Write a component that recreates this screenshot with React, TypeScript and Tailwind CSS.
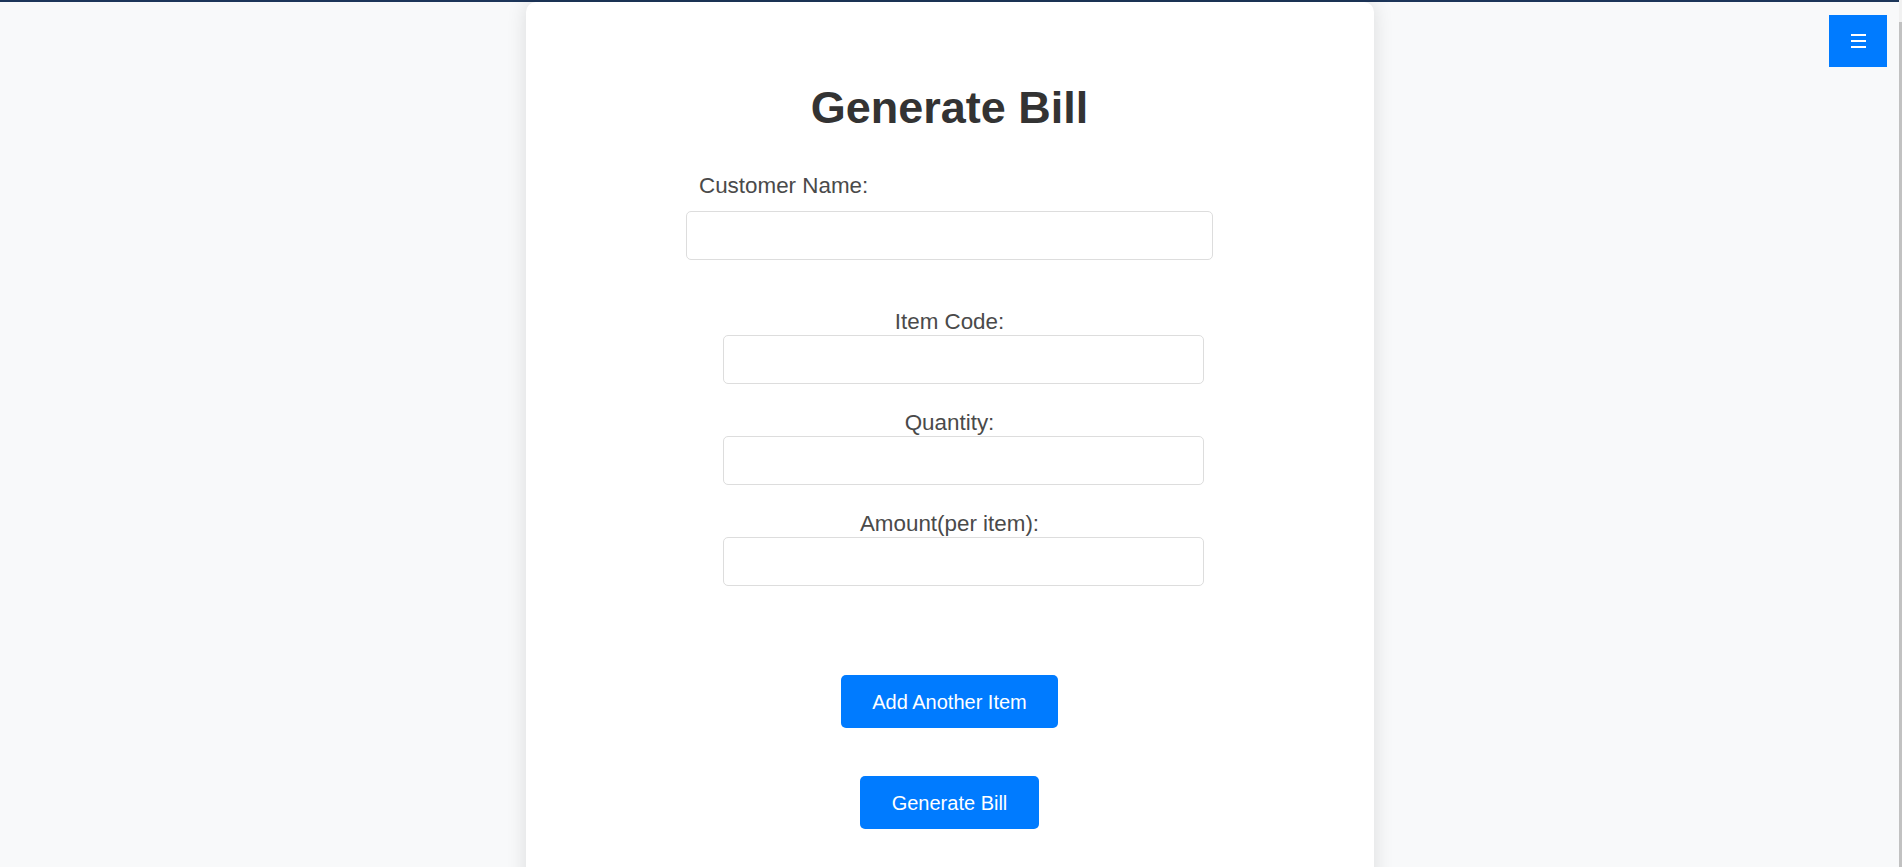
import React from "react";

export default function App() {
  return (
    <div
      className="flex h-screen w-full overflow-hidden bg-[#f8f9fa]"
      style={{ fontFamily: '"Liberation Sans", Arial, sans-serif' }}
    >
      <div className="flex min-h-0 min-w-0 flex-1 flex-col">
        <div className="h-[2px] w-full shrink-0 bg-[#1c3559]" />
        <div className="relative min-h-0 flex-1">
          <div className="mx-auto w-[848px] rounded-t-[10px] bg-white pb-[60px] pt-[80px] shadow-[0_0_20px_rgba(0,0,0,0.12)]">
            <h1 className="text-center text-[45px] font-bold leading-[51px] text-[#333]">
              Generate Bill
            </h1>

            <div className="mx-auto mt-[40px] w-[527px]">
              <label className="block pl-[13px] text-[22.4px] leading-[25px] text-[#4a4a4a]">
                Customer Name:
              </label>
              <input
                type="text"
                className="mt-[13px] block h-[49px] w-full rounded-[5px] border border-[#dddddd] bg-white outline-none"
              />
            </div>

            <div className="mx-auto mt-[49px] flex w-[452px] flex-col gap-[26px]">
              {["Item Code:", "Quantity:", "Amount(per item):"].map((l) => (
                <div key={l}>
                  <label className="block text-center text-[22.4px] leading-[26px] text-[#4a4a4a]">
                    {l}
                  </label>
                  <input
                    type="text"
                    className="block h-[49px] w-[481px] -ml-[1px] rounded-[5px] border border-[#dddddd] bg-white outline-none"
                  />
                </div>
              ))}
            </div>

            <div className="mt-[89px] flex flex-col items-center gap-[48px]">
              <button className="h-[53px] rounded-[5px] bg-[#007bff] px-[31px] text-[20px] text-white">
                Add Another Item
              </button>
              <button className="h-[53px] rounded-[5px] bg-[#007bff] px-[32px] text-[20px] text-white">
                Generate Bill
              </button>
            </div>
          </div>

          <button className="absolute right-[12px] top-[13px] flex h-[52px] w-[58px] flex-col items-center justify-center gap-[4px] bg-[#007bff]">
            <span className="block h-[2px] w-[15px] bg-white" />
            <span className="block h-[2px] w-[15px] bg-white" />
            <span className="block h-[2px] w-[15px] bg-white" />
          </button>
        </div>
      </div>
      <div className="flex w-[3px] shrink-0 flex-col bg-[#f1f1f1]">
        <div className="h-[22px] shrink-0" />
        <div className="flex-1 bg-[#c1c1c1]" />
      </div>
    </div>
  );
}
